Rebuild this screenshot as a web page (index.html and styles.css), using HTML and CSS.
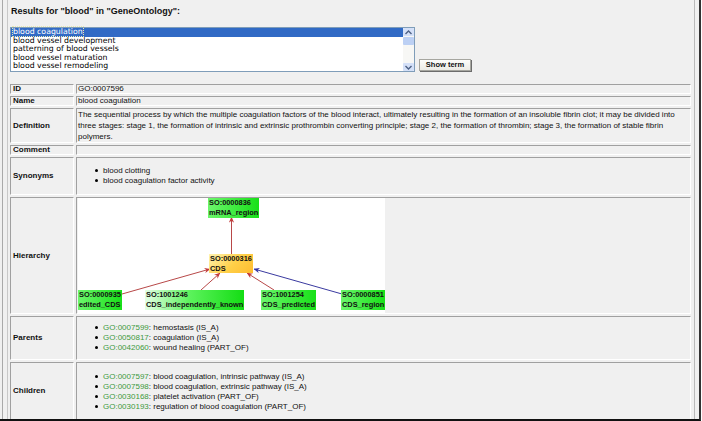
FILE: index.html
```html
<!DOCTYPE html>
<html lang="en">
<head>
	<meta charset="UTF-8">
	<title>Ontology term browser</title>
	<link rel="stylesheet" href="styles.css">
</head>
<body>
	<div class="window">
		<div class="pane">
			<div class="inner">
				<h4 class="title">Results for "blood" in "GeneOntology":</h4>
				<div class="search">
					<div class="listbox">
						<ul class="options">
							<li class="selected"><span>blood coagulation</span></li>
							<li>blood vessel development</li>
							<li>patterning of blood vessels</li>
							<li>blood vessel maturation</li>
							<li>blood vessel remodeling</li>
						</ul>
						<div class="scrollbar">
							<span class="sbtn"><svg width="9" height="7" viewBox="0 0 9 7"><path d="M1.5 5 L4.5 2 L7.5 5" fill="none" stroke="#4d6185" stroke-width="1.4"/></svg></span>
							<span class="thumb"></span>
							<span class="sbtn down"><svg width="9" height="7" viewBox="0 0 9 7"><path d="M1.5 2 L4.5 5 L7.5 2" fill="none" stroke="#4d6185" stroke-width="1.4"/></svg></span>
						</div>
					</div>
					<button class="show">Show term</button>
				</div>
				<table class="term">
					<tr class="r-line">
						<th>ID</th>
						<td>GO:0007596</td>
					</tr>
					<tr class="r-line">
						<th>Name</th>
						<td>blood coagulation</td>
					</tr>
					<tr class="r-def">
						<th>Definition</th>
						<td class="def">The sequential process by which the multiple coagulation factors of the blood interact, ultimately resulting in the formation of an insoluble fibrin clot; it may be divided into three stages: stage 1, the formation of intrinsic and extrinsic prothrombin converting principle; stage 2, the formation of thrombin; stage 3, the formation of stable fibrin polymers.</td>
					</tr>
					<tr class="r-line">
						<th>Comment</th>
						<td></td>
					</tr>
					<tr class="r-syn">
						<th>Synonyms</th>
						<td>
							<ul class="items">
								<li>blood clotting</li>
								<li>blood coagulation factor activity</li>
							</ul>
						</td>
					</tr>
					<tr class="r-hier">
						<th>Hierarchy</th>
						<td>
							<div class="graph">
								<svg class="edges" width="307" height="115" viewBox="0 0 307 115">
									<defs>
										<marker id="ar" viewBox="0 0 8 8" refX="7.5" refY="4" markerWidth="6" markerHeight="6" orient="auto">
											<path d="M0 0.5 L8 4 L0 7.5 L2.5 4 Z" fill="#c23a3a"/>
										</marker>
										<marker id="ab" viewBox="0 0 8 8" refX="7.5" refY="4" markerWidth="6" markerHeight="6" orient="auto">
											<path d="M0 0.5 L8 4 L0 7.5 L2.5 4 Z" fill="#3434a6"/>
										</marker>
									</defs>
									<g stroke="#b84848" stroke-width="1">
										<line x1="153.5" y1="56" x2="153.5" y2="19" marker-end="url(#ar)"/>
										<line x1="44" y1="96" x2="132" y2="71" marker-end="url(#ar)"/>
										<line x1="123" y1="92" x2="142" y2="75" marker-end="url(#ar)"/>
										<line x1="196" y1="92" x2="169" y2="75" marker-end="url(#ar)"/>
									</g>
									<line x1="264" y1="96" x2="176" y2="71" stroke="#3a3aa0" stroke-width="1" marker-end="url(#ab)"/>
								</svg>
								<div class="node" style="left:130px;top:0">SO:0000836<br>mRNA_region</div>
								<div class="node cds" style="left:131px;top:56px">SO:0000316<br>CDS</div>
								<div class="node" style="left:0;top:92px">SO:0000935<br>edited_CDS</div>
								<div class="node wide" style="left:67px;top:92px">SO:1001246<br>CDS_independently_known</div>
								<div class="node" style="left:183px;top:92px">SO:1001254<br>CDS_predicted</div>
								<div class="node" style="left:263px;top:92px">SO:0000851<br>CDS_region</div>
							</div>
						</td>
					</tr>
					<tr class="r-par">
						<th>Parents</th>
						<td>
							<ul class="items">
								<li><a class="go" href="#">GO:0007599</a>: hemostasis (IS_A)</li>
								<li><a class="go" href="#">GO:0050817</a>: coagulation (IS_A)</li>
								<li><a class="go" href="#">GO:0042060</a>: wound healing (PART_OF)</li>
							</ul>
						</td>
					</tr>
					<tr class="r-chi">
						<th>Children</th>
						<td class="top">
							<ul class="items">
								<li><a class="go" href="#">GO:0007597</a>: blood coagulation, intrinsic pathway (IS_A)</li>
								<li><a class="go" href="#">GO:0007598</a>: blood coagulation, extrinsic pathway (IS_A)</li>
								<li><a class="go" href="#">GO:0030168</a>: platelet activation (PART_OF)</li>
								<li><a class="go" href="#">GO:0030193</a>: regulation of blood coagulation (PART_OF)</li>
							</ul>
						</td>
					</tr>
				</table>
			</div>
		</div>
	</div>
</body>
</html>
```
FILE: styles.css
```css
body{
	margin: 0;
	background: #fff;
	font-family: "Liberation Sans", Arial, sans-serif;
	color: #111;
}
.window{
	width: 701px;
	height: 421px;
	box-sizing: border-box;
	padding-left: 2px;
	background: #f0f0f0;
	border-right: 2px solid #333;
	border-bottom: 2px solid #111;
	overflow: hidden;
}
.pane{
	width: 693px;
	height: 100%;
	box-sizing: border-box;
	padding-left: 4px;
	border-left: 1px solid #a9a9a9;
	border-right: 1px solid #b9b9b9;
}
.inner{
	height: 100%;
	border-left: 1px solid #c8c8c8;
}
.title{
	margin: 0;
	padding: 6px 0 0 3px;
	font-size: 9px;
	line-height: 11px;
	font-weight: bold;
}
.search{
	display: flex;
	align-items: flex-end;
	gap: 4px;
	margin: 10px 0 0 2px;
}
.listbox{
	display: flex;
	width: 405px;
	height: 45px;
	box-sizing: border-box;
	border: 1px solid #7f9db9;
	background: #fff;
}
.options{
	flex: 1;
	margin: 0;
	padding: 0;
	list-style: none;
	font-family: "DejaVu Sans", Verdana, sans-serif;
	font-size: 7.8px;
	line-height: 8.6px;
	color: #000;
}
.options li{
	padding-left: 2px;
}
.options .selected{
	background: #316ac5;
	color: #fff;
}
.options .selected span{
	outline: 1px dotted #e8e8b0;
}
.scrollbar{
	display: flex;
	flex-direction: column;
	width: 11px;
	background: #f7f7f5;
}
.sbtn{
	display: flex;
	align-items: center;
	justify-content: center;
	height: 8px;
	background: #d4e0f8;
	border-radius: 1px;
}
.sbtn.down{
	margin-top: auto;
}
.thumb{
	height: 8px;
	margin-top: 1px;
	background: #bcd0f4;
	border-radius: 1px;
}
.show{
	width: 52px;
	height: 12px;
	margin-bottom: 1px;
	padding: 0;
	font-family: "Liberation Sans", Arial, sans-serif;
	font-size: 7.5px;
	font-weight: bold;
	line-height: 10px;
	color: #111;
	background: linear-gradient(#fdfdfb, #ecebe5);
	border: 1px solid #a6a6a0;
	box-shadow: 1px 1px 0 #6c6c6c;
}
.term{
	width: 685px;
	margin-top: 10px;
	border-spacing: 2px;
	table-layout: fixed;
	font-size: 8px;
}
.term th,
.term td{
	border: 1px solid;
	border-color: #a0a0a0 #fff #fff #a0a0a0;
	line-height: 8px;
}
.term th{
	width: 64px;
	box-sizing: border-box;
	padding: 0 2px;
	text-align: left;
	font-weight: bold;
}
.term td{
	padding: 0 1px;
}
.r-line{ height: 10px; }
.r-def{ height: 35px; }
.r-syn{ height: 38px; }
.r-hier{ height: 117px; }
.r-par{ height: 44px; }
.r-chi{ height: 58px; }
.term .def{
	line-height: 11px;
}
.term .top{
	vertical-align: top;
	padding-top: 9px;
}
.items{
	margin: 0;
	padding-left: 17px;
	list-style: none;
	line-height: 10px;
}
.items li::before{
	content: "";
	display: inline-block;
	width: 3px;
	height: 3px;
	margin: 0 5px 1px 0;
	border-radius: 50%;
	background: #000;
	vertical-align: middle;
}
.go{
	color: #3d9a3d;
	text-decoration: none;
}
.graph{
	position: relative;
	width: 307px;
	height: 115px;
	background: #fff;
}
.edges{
	position: absolute;
	left: 0;
	top: 0;
}
.node{
	position: absolute;
	height: 20px;
	padding: 0 1px;
	box-sizing: border-box;
	font-size: 7.4px;
	font-weight: bold;
	line-height: 9.5px;
	white-space: nowrap;
	color: #111;
	background: linear-gradient(to right, #6cf66c, #18e018);
}
.node.wide{
	background: linear-gradient(to right, #e4ffe4, #5cf25c 45%, #14dd14);
}
.node.cds{
	height: 19px;
	background: linear-gradient(135deg, #fff3b0, #ffd048 55%, #ffbc30);
}
```
